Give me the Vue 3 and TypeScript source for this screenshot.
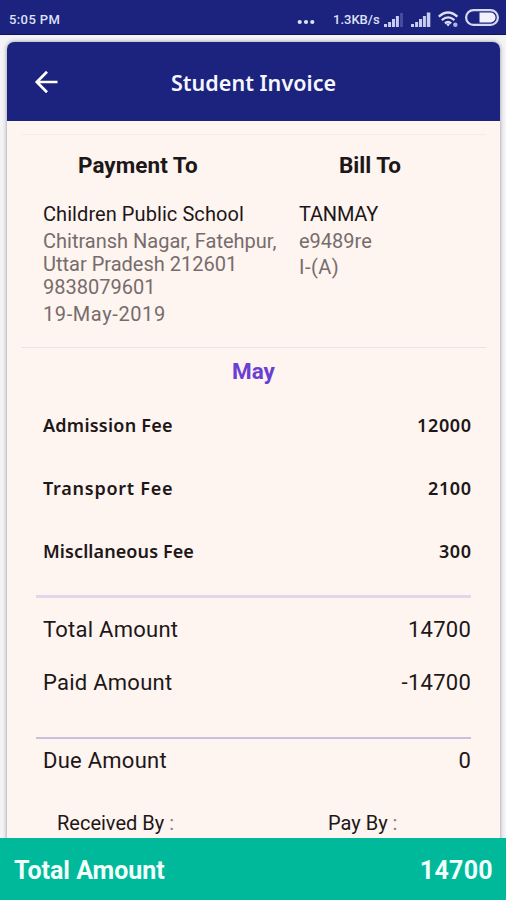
<script setup lang="ts">
interface Line {
  label: string
  amount: string
  spacing?: string
}

const fees: Line[] = [
  { label: 'Admission Fee', amount: '12000', spacing: 'normal' },
  { label: 'Transport Fee', amount: '2100', spacing: 'wide' },
  { label: 'Miscllaneous Fee', amount: '300', spacing: 'tight' },
]

const totals: Line[] = [
  { label: 'Total Amount', amount: '14700' },
  { label: 'Paid Amount', amount: '-14700' },
]
</script>

<template>
  <div class="screen">
    <header class="status">
      <span class="clock">5:05 PM</span>
      <svg class="dots" width="18" height="6" viewBox="0 0 18 6" fill="#dfe1f6">
        <circle cx="2.7" cy="3" r="2.1" /><circle cx="9" cy="3" r="2.1" /><circle cx="15.3" cy="3" r="2.1" />
      </svg>
      <span class="speed">1.3KB/s</span>
      <svg class="signal" width="20" height="15" viewBox="0 0 20 15" fill="#c9cdf0">
        <path d="M0 12h3v3H0zM4.1 10h3v5h-3zM8 7h3v8H8zM11.9 4h3v11h-3z" />
        <path d="M16 1h3v14h-3z" fill="#474d9c" />
      </svg>
      <svg class="signal second" width="20" height="15" viewBox="0 0 20 15" fill="#c9cdf0">
        <path d="M0 12h3v3H0zM4.1 10h3v5h-3zM8 7h3v8H8zM11.9 4h3v11h-3zM15.8 .5h3.5V15h-3.5z" />
      </svg>
      <svg class="wifi" width="22" height="17" viewBox="0 0 22 17" fill="none" stroke="#dcdff5" stroke-width="2.3">
        <path d="M.8 5.7Q10-2.6 19.4 5.7M3.8 9.2q6.3-5.6 12.6 0M6.9 12.4q3.1-2.8 6.2 0" />
        <path d="M7.8 12.5h4.6L10.1 15.4z" fill="#dcdff5" stroke="none" />
        <circle cx="17.3" cy="13.8" r="2.2" fill="#aeb3e3" stroke="none" />
      </svg>
      <svg class="battery" width="34" height="17" viewBox="0 0 34 17">
        <rect x="1.1" y="1.1" width="31.8" height="14.8" rx="7.4" fill="none" stroke="#d6d9f2" stroke-width="2.2" />
        <path d="M14.5 3.5h11a5 5 0 0 1 0 10h-11z" fill="#f0f1fc" />
      </svg>
    </header>

    <main class="page">
      <section class="card">
        <div class="titlebar">
          <svg class="back" width="24" height="24" viewBox="0 0 24 24" fill="none" stroke="#fff" stroke-width="2.7">
            <path d="M23.5 12H3M13 1.8 2.8 12 13 22.2" />
          </svg>
          <h1>Student Invoice</h1>
        </div>

        <div class="parties">
          <div class="party from">
            <h2>Payment To</h2>
            <p class="name">Children Public School</p>
            <p class="address">Chitransh Nagar, Fatehpur,<br />Uttar Pradesh 212601<br />9838079601</p>
            <p class="date">19-May-2019</p>
          </div>
          <div class="party to">
            <h2>Bill To</h2>
            <p class="name">TANMAY</p>
            <p class="address">e9489re</p>
            <p class="date">I-(A)</p>
          </div>
        </div>

        <h3>May</h3>

        <div class="fees">
          <div v-for="fee in fees" :key="fee.label" class="fee">
            <span :class="fee.spacing">{{ fee.label }}</span><span class="fee-amount">{{ fee.amount }}</span>
          </div>
        </div>

        <div class="totals">
          <div v-for="row in totals" :key="row.label" class="total">
            <span>{{ row.label }}</span><span>{{ row.amount }}</span>
          </div>
        </div>

        <div class="total due"><span>Due Amount</span><span>0</span></div>

        <div class="signatures">
          <span>Received By<i> :</i></span><span>Pay By<i> :</i></span>
        </div>
      </section>
    </main>

    <footer class="bottom"><span>Total Amount</span><span class="sum">14700</span></footer>
  </div>
</template>

<style>
body {
  margin: 0;
}
</style>

<style scoped>
.screen {
  width: 506px;
  height: 900px;
  display: flex;
  flex-direction: column;
  overflow: hidden;
  background: #f4f4f7;
  font-family: Roboto, 'Liberation Sans', sans-serif;
  color: #1d1718;
}

h1,
h2,
h3,
p {
  margin: 0;
}

.status {
  box-sizing: border-box;
  flex: none;
  height: 35px;
  padding: 4px 7px 0 9px;
  display: flex;
  align-items: center;
  background: #1b237e;
  border-bottom: 1px solid #10145f;
  color: #dfe1f6;
  font-size: 13px;
  font-weight: 500;
}

.clock {
  flex: 1;
  letter-spacing: 0.4px;
}

.dots {
  margin: 5px 18px 0 0;
}

.speed {
  width: 51px;
  letter-spacing: 0;
  white-space: nowrap;
}

.second {
  margin-left: 7px;
}

.wifi {
  margin-left: 7px;
}

.battery {
  margin: 0 0 3px 5px;
}

.page {
  flex: 1;
  min-height: 0;
  padding: 7px 6px 0 7px;
  overflow: hidden;
}

.card {
  height: 850px;
  border-radius: 7px 7px 0 0;
  overflow: hidden;
  background: #fef4f0;
  box-shadow: 0 0 4px rgba(40, 40, 70, 0.5);
}

.titlebar {
  position: relative;
  height: 79px;
  display: flex;
  align-items: center;
  justify-content: center;
  background: #1b237e;
  color: #f5f6ff;
}

.back {
  position: absolute;
  left: 27px;
  top: 28px;
}

h1 {
  font: 600 21.5px/30px 'Noto Sans', sans-serif;
  letter-spacing: 0.05px;
  padding-top: 3px;
}

.parties {
  box-sizing: border-box;
  height: 214px;
  margin: 13px 14px 0;
  padding-left: 22px;
  display: grid;
  grid-template-columns: 256px 1fr;
  border-top: 1px solid #f7ebe9;
  border-bottom: 1px solid #eee2e4;
}

h2 {
  margin-top: 17px;
  padding-left: 35px;
  font-size: 22.5px;
  line-height: 26px;
  font-weight: 700;
  letter-spacing: 0.05px;
}

.to h2 {
  padding-left: 40px;
  letter-spacing: 0;
}

.party p {
  font-size: 20px;
  line-height: 23.4px;
  letter-spacing: 0;
  white-space: nowrap;
}

.party .name {
  margin-top: 25px;
  letter-spacing: 0.07px;
}

.to .name {
  letter-spacing: -0.2px;
}

.party .address,
.party .date {
  margin-top: 3.2px;
  color: #776c6c;
}

.from .date {
  letter-spacing: 0.6px;
}

.to .date {
  letter-spacing: 0.5px;
}

h3 {
  margin-top: 10px;
  text-align: center;
  font-size: 22.5px;
  line-height: 26px;
  font-weight: 700;
  color: #6b3fd4;
}

.fees {
  height: 211px;
  margin: 0 29px;
  border-bottom: 3px solid #e3d5ea;
}

.fee {
  height: 63px;
  padding: 0 0 0 7px;
  display: flex;
  align-items: center;
  justify-content: space-between;
  font: 600 18px/24px 'Noto Sans', sans-serif;
}

.fees .fee:first-child {
  padding-top: 9px;
}

.normal {
  letter-spacing: 0.25px;
}

.wide {
  letter-spacing: 0.75px;
}

.tight {
  letter-spacing: 0.1px;
}

.fee-amount {
  letter-spacing: 0.6px;
  margin-right: -0.6px;
}

.totals {
  box-sizing: border-box;
  height: 141px;
  margin: 0 29px;
  padding-top: 5px;
  border-bottom: 2px solid #c9c0dc;
}

.total {
  height: 53px;
  padding-left: 7px;
  display: flex;
  align-items: center;
  justify-content: space-between;
  font-size: 22px;
  letter-spacing: 0.25px;
}

.total.due {
  height: 42px;
  margin: 0 29px;
}

.signatures {
  display: grid;
  grid-template-columns: 271px 1fr;
  padding: 30px 0 0 50px;
  font-size: 20px;
  line-height: 24px;
}

.signatures i {
  font-style: normal;
  color: #8b807f;
}

.bottom {
  position: relative;
  box-sizing: border-box;
  flex: none;
  height: 62px;
  padding: 3px 13px 0 14px;
  display: flex;
  align-items: center;
  justify-content: space-between;
  background: #00b99a;
  color: #f2fffc;
  font-size: 25px;
  font-weight: 700;
}

.sum {
  letter-spacing: 0.3px;
}
</style>
